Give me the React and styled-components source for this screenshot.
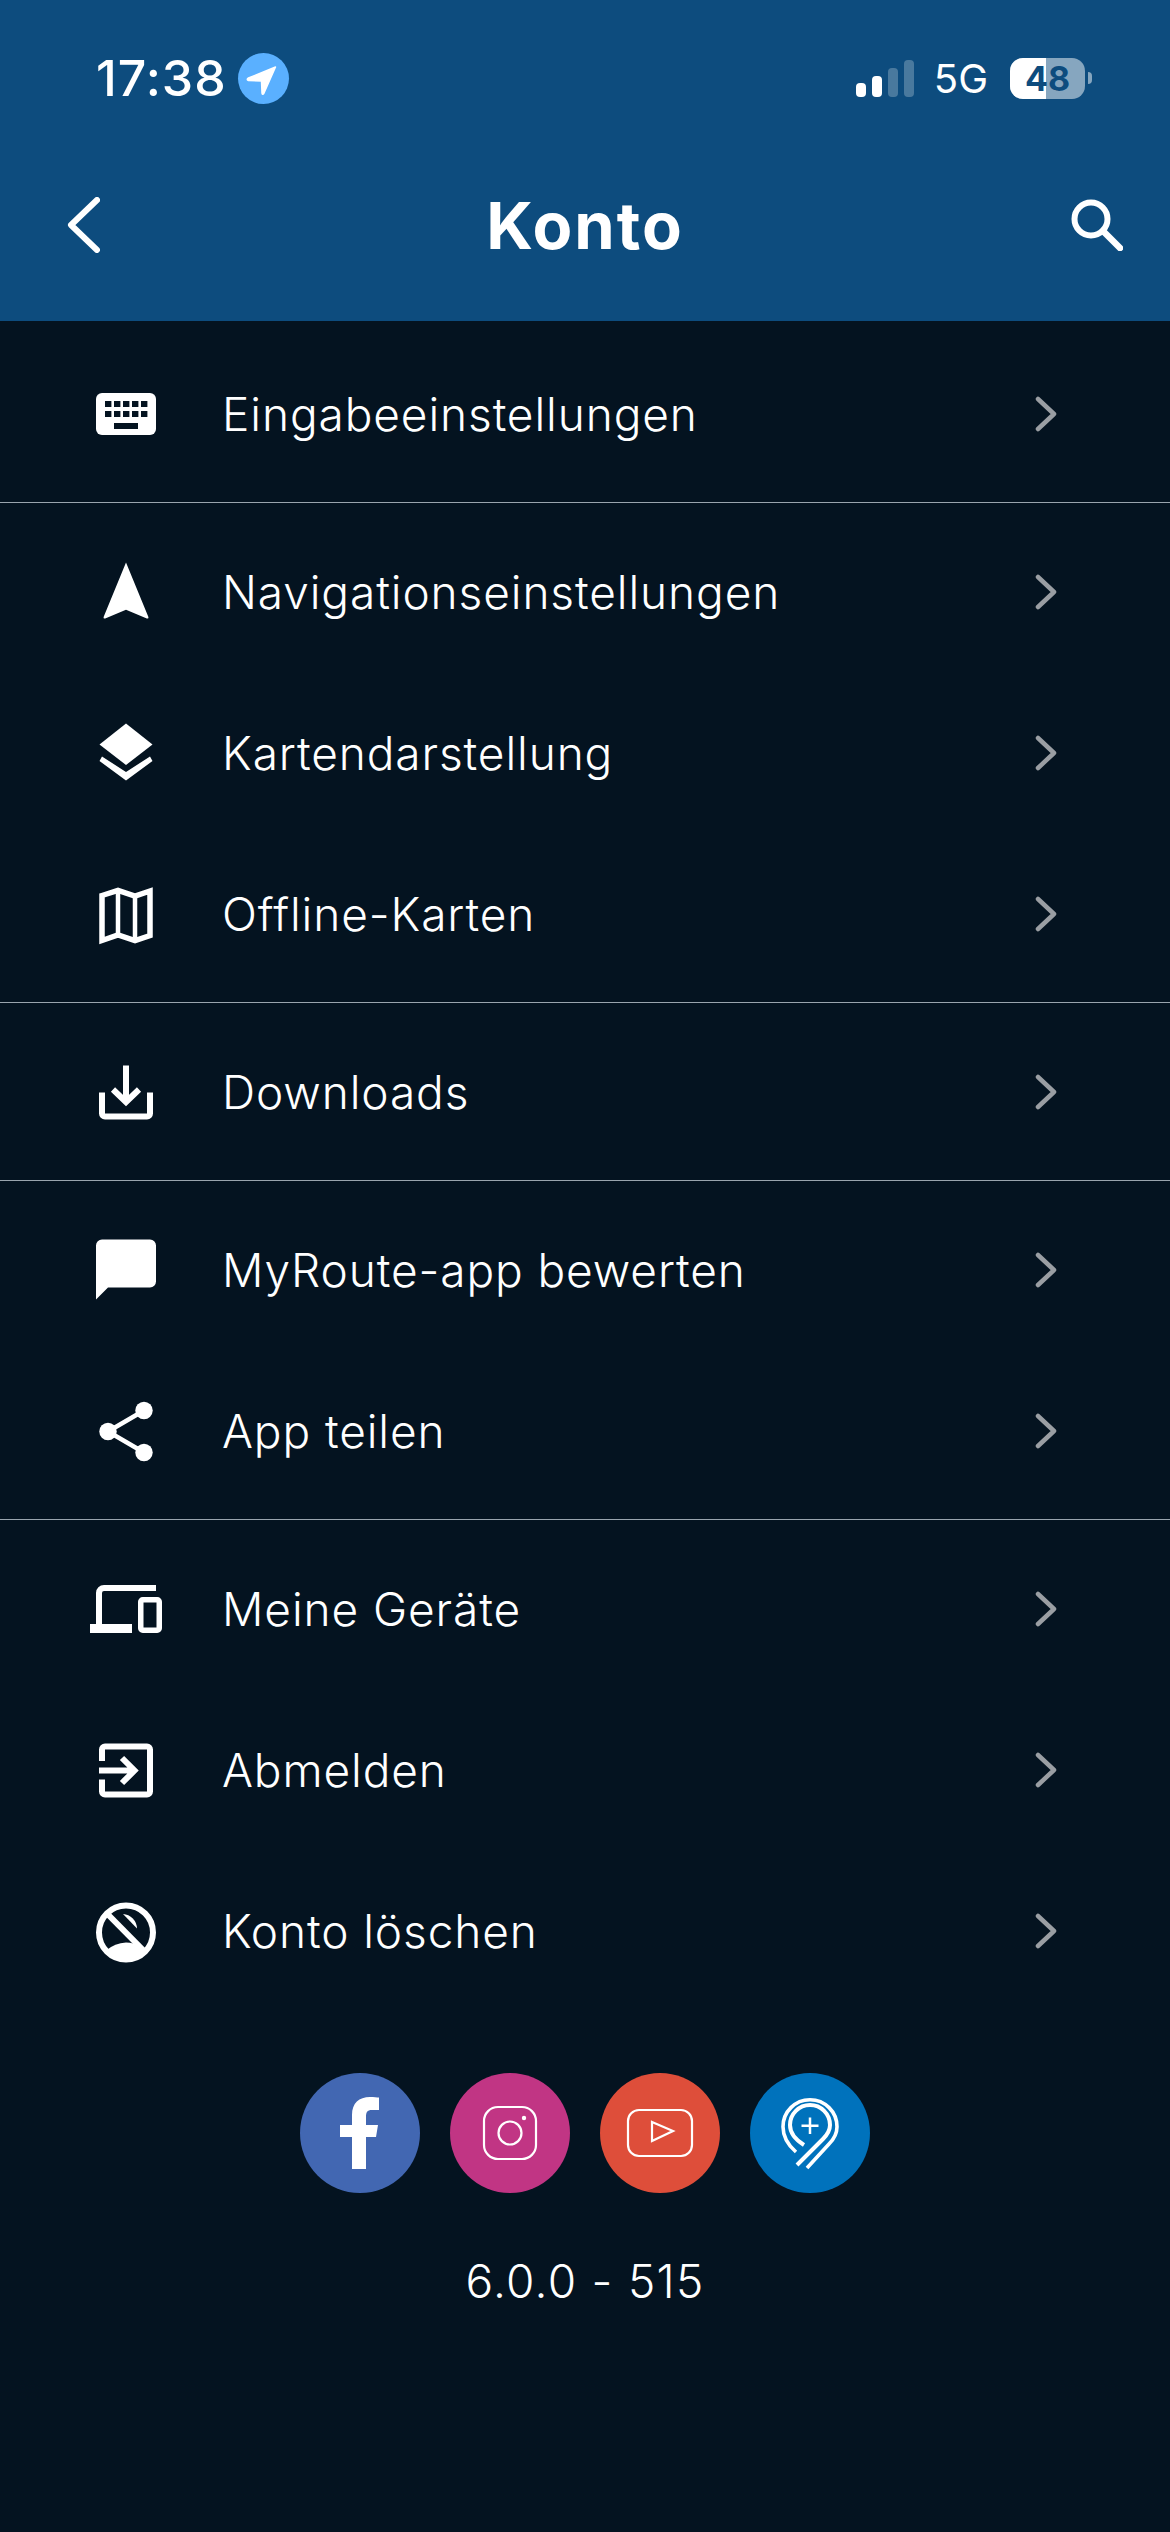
import React from "react";
import styled, { createGlobalStyle } from "styled-components";

const GlobalStyle = createGlobalStyle`
  html, body {
    margin: 0;
    padding: 0;
    background: #041320;
  }
`;

function KeyboardIcon() {
  const keys = [15, 24, 33, 42, 51];
  return (
    <Icon viewBox="0 0 72 72">
      <rect x="6" y="15" width="60" height="42" rx="6" fill="#fff" />
      {keys.map((x) => (
        <rect key={`a${x}`} x={x} y="23" width="6.4" height="6" fill="#041320" />
      ))}
      {keys.map((x) => (
        <rect key={`b${x}`} x={x} y="33" width="6.4" height="6" fill="#041320" />
      ))}
      <rect x="24" y="45" width="24" height="6" fill="#041320" />
    </Icon>
  );
}

function NavigationIcon() {
  return (
    <Icon viewBox="0 0 72 72">
      <path d="M36 6.5 L58.4 61 Q58.8 63 56.8 62.4 L36 53.8 L15.2 62.4 Q13.2 63 13.6 61 Z" fill="#fff" />
    </Icon>
  );
}

function LayersIcon() {
  return (
    <Icon viewBox="0 0 72 72">
      <path d="M36 6.5 L62.5 27.5 L36 48 L9.5 27.5 Z" fill="#fff" />
      <path d="M12 39.5 L36 55 L60 39.5 L62.5 44 L36 63.5 L9.5 44 Z" fill="#fff" />
    </Icon>
  );
}

function MapIcon() {
  return (
    <Icon viewBox="0 0 72 72">
      <path
        d="M12 17.5 L28 12.5 L45 18 L60 13 V57.5 L45 62.5 L28 57 L12 62.5 Z"
        fill="none"
        stroke="#fff"
        strokeWidth="5.5"
      />
      <path d="M28 12.5 V57 M45 18 V62.5" fill="none" stroke="#fff" strokeWidth="4.5" />
    </Icon>
  );
}

function DownloadIcon() {
  return (
    <Icon viewBox="0 0 72 72">
      <path d="M12 36.5 V57.5 a3 3 0 0 0 3 3 H57 a3 3 0 0 0 3 -3 V36.5" fill="none" stroke="#fff" strokeWidth="6" />
      <path d="M36 9.5 V46 M23 33.5 L36 46 L49 33.5" fill="none" stroke="#fff" strokeWidth="6" />
    </Icon>
  );
}

function ChatIcon() {
  return (
    <Icon viewBox="0 0 72 72">
      <path d="M12 5.5 H60 a6 6 0 0 1 6 6 V47.5 a6 6 0 0 1 -6 6 H18 L6 65.5 V11.5 a6 6 0 0 1 6 -6 Z" fill="#fff" />
    </Icon>
  );
}

function ShareIcon() {
  return (
    <Icon viewBox="0 0 72 72">
      <path d="M54 15.5 L18 36.5 L54 57.5" fill="none" stroke="#fff" strokeWidth="4.5" />
      <circle cx="54" cy="15.5" r="8.7" fill="#fff" />
      <circle cx="18" cy="36.5" r="8.7" fill="#fff" />
      <circle cx="54" cy="57.5" r="8.7" fill="#fff" />
    </Icon>
  );
}

function DevicesIcon() {
  return (
    <Icon viewBox="0 0 72 72">
      <path d="M66 15 H14 a5 5 0 0 0 -5 5 V52" fill="none" stroke="#fff" strokeWidth="6" />
      <rect x="0" y="51" width="42" height="9" fill="#fff" />
      <rect x="50.75" y="26.75" width="18.5" height="30.5" rx="2" fill="none" stroke="#fff" strokeWidth="5.5" />
    </Icon>
  );
}

function ExitIcon() {
  return (
    <Icon viewBox="0 0 72 72">
      <path
        d="M12 27 V15.5 a3 3 0 0 1 3 -3 H57 a3 3 0 0 1 3 3 V57.5 a3 3 0 0 1 -3 3 H15 a3 3 0 0 1 -3 -3 V45.5"
        fill="none"
        stroke="#fff"
        strokeWidth="6"
      />
      <path d="M9 36.5 H44 M32 24 L44.5 36.5 L32 49" fill="none" stroke="#fff" strokeWidth="6" />
    </Icon>
  );
}

function DeleteIcon() {
  return (
    <Icon viewBox="0 0 72 72">
      <circle cx="36" cy="37.5" r="27" fill="none" stroke="#fff" strokeWidth="6" />
      <path d="M16 17.5 L55 57" fill="none" stroke="#fff" strokeWidth="6" />
      <path d="M33 19 A15 15 0 0 1 47 33.5 Z" fill="#fff" />
      <path d="M16 55.5 Q25 48 36 47.5 Q44 47.5 49 51 L54 56 A27 27 0 0 1 16 55.5 Z" fill="#fff" />
    </Icon>
  );
}

const rows = [
  [
    { label: "Eingabeeinstellungen", icon: KeyboardIcon },
  ],
  [
    { label: "Navigationseinstellungen", icon: NavigationIcon },
    { label: "Kartendarstellung", icon: LayersIcon },
    { label: "Offline-Karten", icon: MapIcon },
  ],
  [
    { label: "Downloads", icon: DownloadIcon },
  ],
  [
    { label: "MyRoute-app bewerten", icon: ChatIcon },
    { label: "App teilen", icon: ShareIcon },
  ],
  [
    { label: "Meine Geräte", icon: DevicesIcon },
    { label: "Abmelden", icon: ExitIcon },
    { label: "Konto löschen", icon: DeleteIcon },
  ],
];

export default function App() {
  return (
    <Page>
      <GlobalStyle />
      <Header>
        <StatusBar>
          <StatusLeft>
            <Time>17:38</Time>
            <LocationBadge>
              <svg width="51" height="51" viewBox="0 0 51 51">
                <path
                  d="M37.5 14 L26 40 Q24.5 42.5 24 40 L23.5 28 L10.5 27.5 Q8 26.5 10.5 25 Z"
                  fill="#fff"
                  stroke="#fff"
                  strokeWidth="1.5"
                  strokeLinejoin="round"
                />
              </svg>
            </LocationBadge>
          </StatusLeft>
          <StatusRight>
            <Signal>
              <SignalBar $height={14} />
              <SignalBar $height={21} />
              <SignalBar $height={29} $dim />
              <SignalBar $height={37} $dim />
            </Signal>
            <Network>5G</Network>
            <Battery>
              <BatteryBody>
                <BatteryFill style={{ width: "48%" }} />
                <BatteryText>48</BatteryText>
              </BatteryBody>
              <BatteryNub />
            </Battery>
          </StatusRight>
        </StatusBar>
        <NavBar>
          <BackWrap>
            <svg width="33" height="56" viewBox="0 0 33 56">
              <path d="M30 3 L4 28 L30 53" fill="none" stroke="#fff" strokeWidth="6" strokeLinecap="round" strokeLinejoin="round" />
            </svg>
          </BackWrap>
          <Title>Konto</Title>
          <SearchWrap>
            <svg width="52" height="52" viewBox="0 0 52 52">
              <circle cx="20" cy="20" r="16.5" fill="none" stroke="#fff" strokeWidth="6" />
              <path d="M32 32 L49 49" fill="none" stroke="#fff" strokeWidth="6.5" strokeLinecap="round" />
            </svg>
          </SearchWrap>
        </NavBar>
      </Header>

      {rows.map((group) => (
        <Group key={group[0].label}>
          {group.map((row) => {
            const RowIcon = row.icon;
            return (
              <Row key={row.label}>
                <RowIcon />
                <Label>{row.label}</Label>
                <svg width="24" height="36" viewBox="0 0 24 36">
                  <path d="M4 3 L20 18 L4 33" fill="none" stroke="#9a9ea3" strokeWidth="4.5" strokeLinecap="round" strokeLinejoin="round" />
                </svg>
              </Row>
            );
          })}
        </Group>
      ))}

      <Socials>
        <SocialCircle $color="#4267b2">
          <svg width="120" height="120" viewBox="0 0 120 120">
            <path
              d="M52 96 V64 H40 V52 H52 V42 C52 30 59 24 70 24 C74 24 77 24.3 79 24.6 V37 H72 C67 37 66 39.5 66 44 V52 H78 L76 64 H66 V96 Z"
              fill="#fff"
            />
          </svg>
        </SocialCircle>
        <SocialCircle $color="#c13584">
          <svg width="120" height="120" viewBox="0 0 120 120">
            <rect x="34" y="34" width="52" height="52" rx="14" fill="none" stroke="#fff" strokeWidth="2.2" />
            <circle cx="60" cy="60" r="11.5" fill="none" stroke="#fff" strokeWidth="2.2" />
            <circle cx="74" cy="45" r="2.2" fill="#fff" />
          </svg>
        </SocialCircle>
        <SocialCircle $color="#de4e3a">
          <svg width="120" height="120" viewBox="0 0 120 120">
            <rect x="28" y="37" width="64" height="46" rx="11" fill="none" stroke="#fff" strokeWidth="2.2" />
            <path d="M52 49 L73 58 L52 68 Z" fill="none" stroke="#fff" strokeWidth="2.2" />
          </svg>
        </SocialCircle>
        <SocialCircle $color="#0072bc">
          <svg width="120" height="120" viewBox="0 0 120 120">
            <path
              d="M46 79 C38 72 33 64 33 53.7 A27 27 0 0 1 87 53.7 C87 62 83 67 79 71 L57 95"
              fill="none"
              stroke="#fff"
              strokeWidth="3.6"
            />
            <path
              d="M54 72 C46 67 40 61 40 52 A20 20 0 0 1 80 52 C80 58 77 62 73 66 L47 92"
              fill="none"
              stroke="#fff"
              strokeWidth="4"
            />
            <path d="M60 44.5 V61 M51.5 52.7 H68.5" fill="none" stroke="#fff" strokeWidth="2.5" />
          </svg>
        </SocialCircle>
      </Socials>
      <Version>6.0.0 - 515</Version>
    </Page>
  );
}

const Page = styled.div`
  width: 1170px;
  min-height: 2532px;
  background: #041320;
  color: #fff;
  font-family: Inter, "Noto Sans", sans-serif;
`;

const Header = styled.header`
  height: 321px;
  background: #0d4c7e;
`;

const StatusBar = styled.div`
  height: 156px;
  display: flex;
  align-items: center;
  justify-content: space-between;
  padding: 0 78px 0 96px;
  box-sizing: border-box;
`;

const StatusLeft = styled.div`
  display: flex;
  align-items: center;
  gap: 11px;
`;

const Time = styled.span`
  font-size: 50px;
  font-weight: 500;
  letter-spacing: 1px;
`;

const LocationBadge = styled.span`
  width: 51px;
  height: 51px;
  border-radius: 50%;
  background: #5ab0ff;
  display: flex;
`;

const StatusRight = styled.div`
  display: flex;
  align-items: center;
  gap: 20px;
`;

const Signal = styled.div`
  display: flex;
  align-items: flex-end;
  gap: 6px;
  height: 37px;
`;

const SignalBar = styled.span`
  width: 10px;
  height: ${(p) => p.$height}px;
  border-radius: 4px;
  background: ${(p) => (p.$dim ? "rgba(255, 255, 255, 0.25)" : "#fff")};
`;

const Network = styled.span`
  font-size: 40px;
  font-weight: 400;
  margin-right: 2px;
`;

const Battery = styled.div`
  display: flex;
  align-items: center;
  gap: 3px;
`;

const BatteryBody = styled.div`
  position: relative;
  width: 75px;
  height: 41px;
  border-radius: 13px;
  overflow: hidden;
  background: rgba(255, 255, 255, 0.5);
  display: flex;
  align-items: center;
  justify-content: center;
`;

const BatteryFill = styled.span`
  position: absolute;
  left: 0;
  top: 0;
  bottom: 0;
  background: #fff;
`;

const BatteryText = styled.span`
  position: relative;
  font-size: 34px;
  font-weight: 700;
  color: #0d4c7e;
`;

const BatteryNub = styled.span`
  width: 4px;
  height: 12px;
  border-radius: 0 4px 4px 0;
  background: rgba(255, 255, 255, 0.5);
`;

const NavBar = styled.div`
  height: 138px;
  display: grid;
  grid-template-columns: 1fr auto 1fr;
  align-items: center;
  padding: 0 47px;
`;

const BackWrap = styled.div`
  display: flex;
  padding-left: 20px;
`;

const Title = styled.h1`
  margin: 0;
  font-size: 65px;
  font-weight: 700;
  letter-spacing: 2px;
`;

const SearchWrap = styled.div`
  display: flex;
  justify-content: flex-end;
`;

const Group = styled.section`
  padding: 8px 0;
  border-bottom: 1px solid #9aa5ae;

  &:first-of-type {
    padding-top: 12px;
  }

  &:last-of-type {
    padding-bottom: 0;
    border-bottom: none;
  }
`;

const Row = styled.div`
  height: 161px;
  display: flex;
  align-items: center;
  padding: 0 112px 0 90px;
`;

const Icon = styled.svg`
  width: 72px;
  height: 72px;
  flex: none;
`;

const Label = styled.span`
  flex: 1;
  margin-left: 60px;
  font-size: 46px;
  font-weight: 300;
  letter-spacing: 0.9px;
`;

const Socials = styled.div`
  display: flex;
  justify-content: center;
  gap: 30px;
  margin-top: 62px;
`;

const SocialCircle = styled.div`
  width: 120px;
  height: 120px;
  border-radius: 50%;
  background: ${(p) => p.$color};
`;

const Version = styled.div`
  margin-top: 60px;
  text-align: center;
  font-size: 46px;
  font-weight: 300;
  letter-spacing: 1.3px;
`;
